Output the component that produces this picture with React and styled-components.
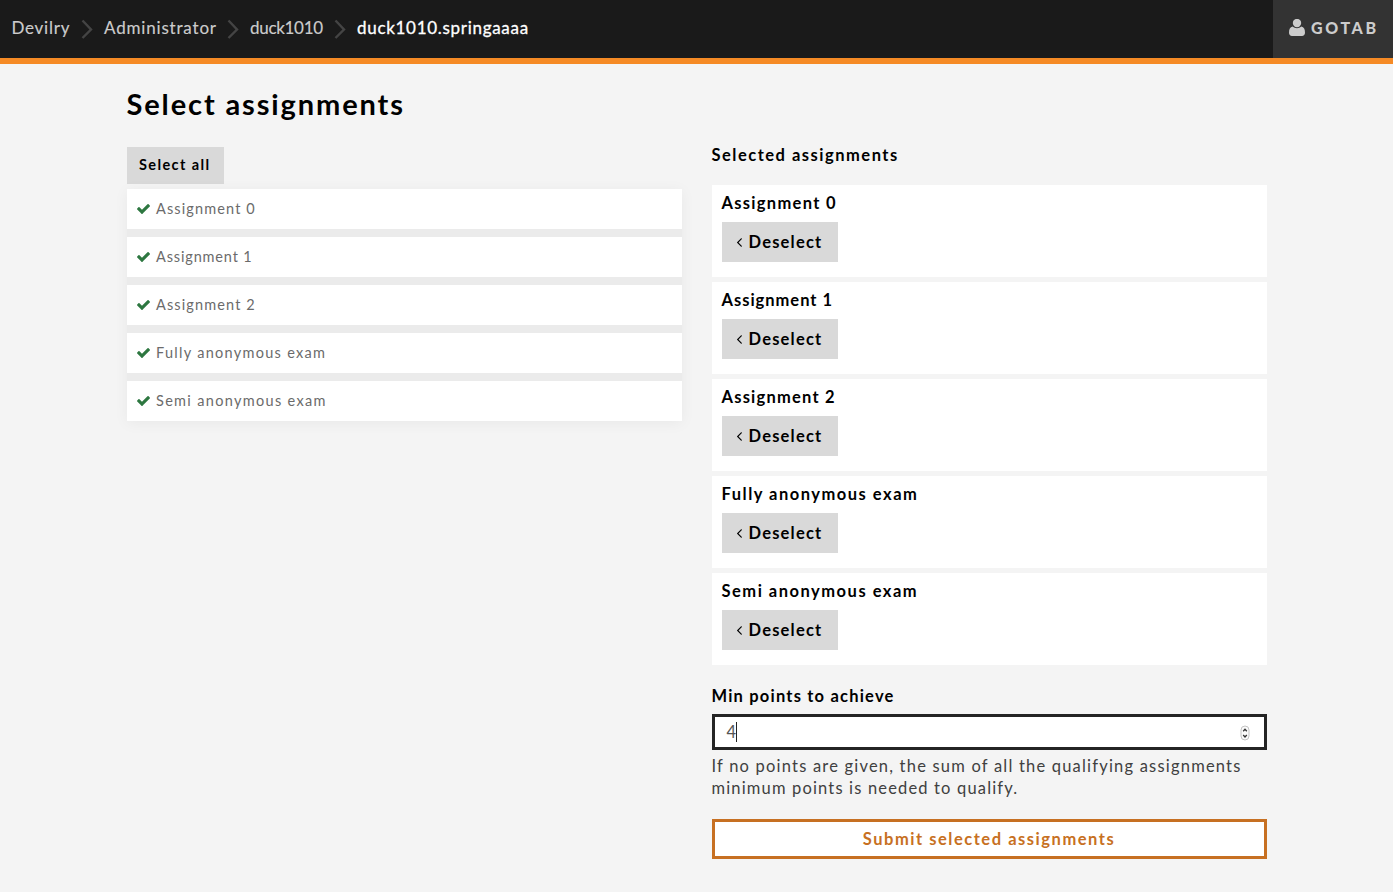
import React from "react";
import styled, { createGlobalStyle } from "styled-components";

const GlobalStyle = createGlobalStyle`
  * { box-sizing: border-box; }
  body {
    margin: 0;
    background: #f4f4f4;
    color: #000;
    font-family: Lato, "Open Sans", sans-serif;
    font-size: 16.5px;
    font-variant-ligatures: none;
  }
  button { font-family: inherit; color: inherit; border: 0; margin: 0; cursor: pointer; }
  h1, h2, h3, p, ul { margin: 0; padding: 0; }
`;

const Text = styled.span`
  letter-spacing: ${(p) => p.$spacing}px;
  white-space: nowrap;
`;

const RaisedText = styled(Text)`
  line-height: 20px;
  margin-bottom: 1px;
`;

const Header = styled.header`
  display: flex;
  justify-content: space-between;
  height: 64px;
  background: #1a1a1a;
  border-bottom: 6px solid #f58a25;
`;

const Breadcrumbs = styled.nav`
  display: flex;
  align-items: center;
  padding-left: 11.5px;
  font-size: 17px;
  color: #ccc;
`;

const Crumb = styled.a`
  width: ${(p) => p.$width}px;
  line-height: 24px;
  padding-bottom: 3px;
  letter-spacing: ${(p) => p.$spacing}px;
  white-space: nowrap;
  color: ${(p) => (p.$current ? "#fff" : "#ccc")};
  -webkit-text-stroke: ${(p) => (p.$current ? "0.3px #fff" : "0.15px #ccc")};
`;

const Separator = styled.svg`
  width: 12px;
  height: 20px;
  margin: 0 11px 0 10px;
  fill: none;
  stroke: #444;
  stroke-width: 2.4;
`;

const UserButton = styled.button`
  display: flex;
  align-items: center;
  width: 120px;
  padding: 0 0 3px 16px;
  background: #333;
  color: #ccc;
  font-size: 16px;
  font-weight: 900;
  gap: 6px;
`;

const Main = styled.main`
  width: 1140px;
  margin-left: 126.5px;
  padding-top: 21px;
`;

const Title = styled.h1`
  height: 59px;
  font-size: 29px;
  line-height: 38px;
  font-weight: 700;
`;

const Columns = styled.div`
  display: grid;
  grid-template-columns: 555px 555px;
  column-gap: 30px;
  align-items: start;
`;

const Column = styled.section`
  display: flex;
  flex-direction: column;
  align-items: stretch;
`;

const SelectAll = styled.button`
  align-self: flex-start;
  width: 97px;
  height: 37px;
  margin: 3px 0 5px;
  padding: 0 0 3px 12.5px;
  text-align: left;
  background: #d9d9d9;
  font-size: 14.5px;
  font-weight: 700;
`;

const CheckList = styled.ul`
  display: flex;
  flex-direction: column;
  gap: 8px;
  list-style: none;
  background: #ebebeb;
  box-shadow: 0 2px 14px rgba(0, 0, 0, 0.05);
`;

const CheckItem = styled.li`
  display: flex;
  align-items: center;
  height: 40px;
  padding-left: 10px;
  gap: 6.5px;
  background: #fff;
  color: #6b6b6b;
  font-size: 14.5px;
`;

const Heading = styled.h2`
  font-size: 16.5px;
  line-height: 22px;
  font-weight: 700;
`;

const CardList = styled.div`
  display: flex;
  flex-direction: column;
  gap: 5px;
  margin: 19px 0 20px;
`;

const Card = styled.article`
  height: 92px;
  padding: 7px 10px 15px;
  background: #fff;
`;

const CardTitle = styled.h3`
  font-size: 16.5px;
  line-height: 22px;
  font-weight: 700;
  margin-bottom: 8px;
`;

const Deselect = styled.button`
  display: flex;
  align-items: center;
  width: 116px;
  height: 40px;
  padding: 0 0 0 15px;
  gap: 7px;
  background: #d9d9d9;
  font-size: 16.5px;
  font-weight: 700;
`;

const Field = styled.div`
  display: flex;
  align-items: center;
  height: 36px;
  margin: 7px 0 5px;
  padding: 0 14px 0 12px;
  border: 3px solid #242424;
  background: #fff;
  color: #555;
`;

const Caret = styled.span`
  width: 1px;
  height: 20px;
  background: #222;
`;

const Stepper = styled.svg`
  width: 10px;
  height: 16px;
  margin: 1px 0 0 auto;
`;

const Help = styled.p`
  display: flex;
  flex-direction: column;
  line-height: 22px;
  color: #404040;
`;

const Submit = styled.button`
  height: 40px;
  margin-top: 20px;
  padding: 0;
  border: 3px solid #c77022;
  background: #fff;
  color: #c77022;
  font-size: 16.5px;
  font-weight: 700;
`;

const UserIcon = () => (
  <svg width="16" height="18" viewBox="0 0 16 18" fill="#ccc">
    <circle cx="8" cy="4" r="4.2" />
    <path d="M3.700 7.600C1 8 0 10.400 0 13.700c0 2 1.200 3.200 3 3.200h10c1.800 0 3-1.200 3-3.200 0-3.300-1-5.700-3.700-6.100-2.500 2.300-6.100 2.300-8.600 0z" />
  </svg>
);

const CheckIcon = () => (
  <svg width="13" height="10" viewBox="121 334 1550 1188" fill="#2d7740">
    <path d="M1671 566q0 40-28 68l-724 724-136 136q-28 28-68 28t-68-28l-136-136-362-362q-28-28-28-68t28-68l136-136q28-28 68-28t68 28l294 295 656-657q28-28 68-28t68 28l136 136q28 28 28 68z" />
  </svg>
);

const AngleLeft = styled.svg`
  width: 5px;
  height: 9px;
  margin-top: 1px;
`;

const AngleLeftIcon = () => (
  <AngleLeft viewBox="621 478 582 964">
    <path d="M1203 544q0 13-10 23l-393 393 393 393q10 10 10 23t-10 23l-50 50q-10 10-23 10t-23-10l-466-466q-10-10-10-23t10-23l466-466q10-10 23-10t23 10l50 50q10 10 10 23z" />
  </AngleLeft>
);

const crumbs = [
  { label: "Devilry", width: 59.5, spacing: 0.75 },
  { label: "Administrator", width: 113, spacing: 0.82 },
  { label: "duck1010", width: 74, spacing: -0.3 },
  { label: "duck1010.springaaaa", width: 175, spacing: 0.7, current: true },
];

const assignments = [
  { name: "Assignment 0", list: 1.12, card: 1.3 },
  { name: "Assignment 1", list: 0.85, card: 0.98 },
  { name: "Assignment 2", list: 1.12, card: 1.22 },
  { name: "Fully anonymous exam", list: 1.29, card: 1.5 },
  { name: "Semi anonymous exam", list: 1.32, card: 1.5 },
];

export default function App() {
  return (
    <>
      <GlobalStyle />
      <Header>
        <Breadcrumbs>
          {crumbs.map((c, i) => (
            <React.Fragment key={c.label}>
              {i > 0 && (
                <Separator viewBox="0 0 12 20">
                  <path d="M1.500 1.500 10 10.500 1.500 19" />
                </Separator>
              )}
              <Crumb $width={c.width} $spacing={c.spacing} $current={c.current}>
                {c.label}
              </Crumb>
            </React.Fragment>
          ))}
        </Breadcrumbs>
        <UserButton>
          <UserIcon />
          <Text $spacing={2.6}>GOTAB</Text>
        </UserButton>
      </Header>
      <Main>
        <Title><Text $spacing={1.88}>Select assignments</Text></Title>
        <Columns>
          <Column>
            <SelectAll><Text $spacing={1.4}>Select all</Text></SelectAll>
            <CheckList>
              {assignments.map((a) => (
                <CheckItem key={a.name}>
                  <CheckIcon />
                  <RaisedText $spacing={a.list}>{a.name}</RaisedText>
                </CheckItem>
              ))}
            </CheckList>
          </Column>
          <Column>
            <Heading><Text $spacing={1.5}>Selected assignments</Text></Heading>
            <CardList>
              {assignments.map((a) => (
                <Card key={a.name}>
                  <CardTitle><Text $spacing={a.card}>{a.name}</Text></CardTitle>
                  <Deselect>
                    <AngleLeftIcon />
                    <RaisedText $spacing={1.2}>Deselect</RaisedText>
                  </Deselect>
                </Card>
              ))}
            </CardList>
            <Heading as="label"><Text $spacing={1.2}>Min points to achieve</Text></Heading>
            <Field>
              <RaisedText $spacing={0}>4</RaisedText>
              <Caret />
              <Stepper viewBox="0 0 10 16">
                <rect x="1" y="1" width="8" height="14" rx="4" fill="#fafafa" stroke="#c4c4c4" />
                <path d="M3.200 6.200 5 4.200 6.800 6.200M3.200 10 5 12 6.800 10" fill="none" stroke="#333" strokeWidth="1.300" />
              </Stepper>
            </Field>
            <Help>
              <Text $spacing={1.2}>If no points are given, the sum of all the qualifying assignments</Text>
              <Text $spacing={1.16}>minimum points is needed to qualify.</Text>
            </Help>
            <Submit><Text $spacing={1.53}>Submit selected assignments</Text></Submit>
          </Column>
        </Columns>
      </Main>
    </>
  );
}
